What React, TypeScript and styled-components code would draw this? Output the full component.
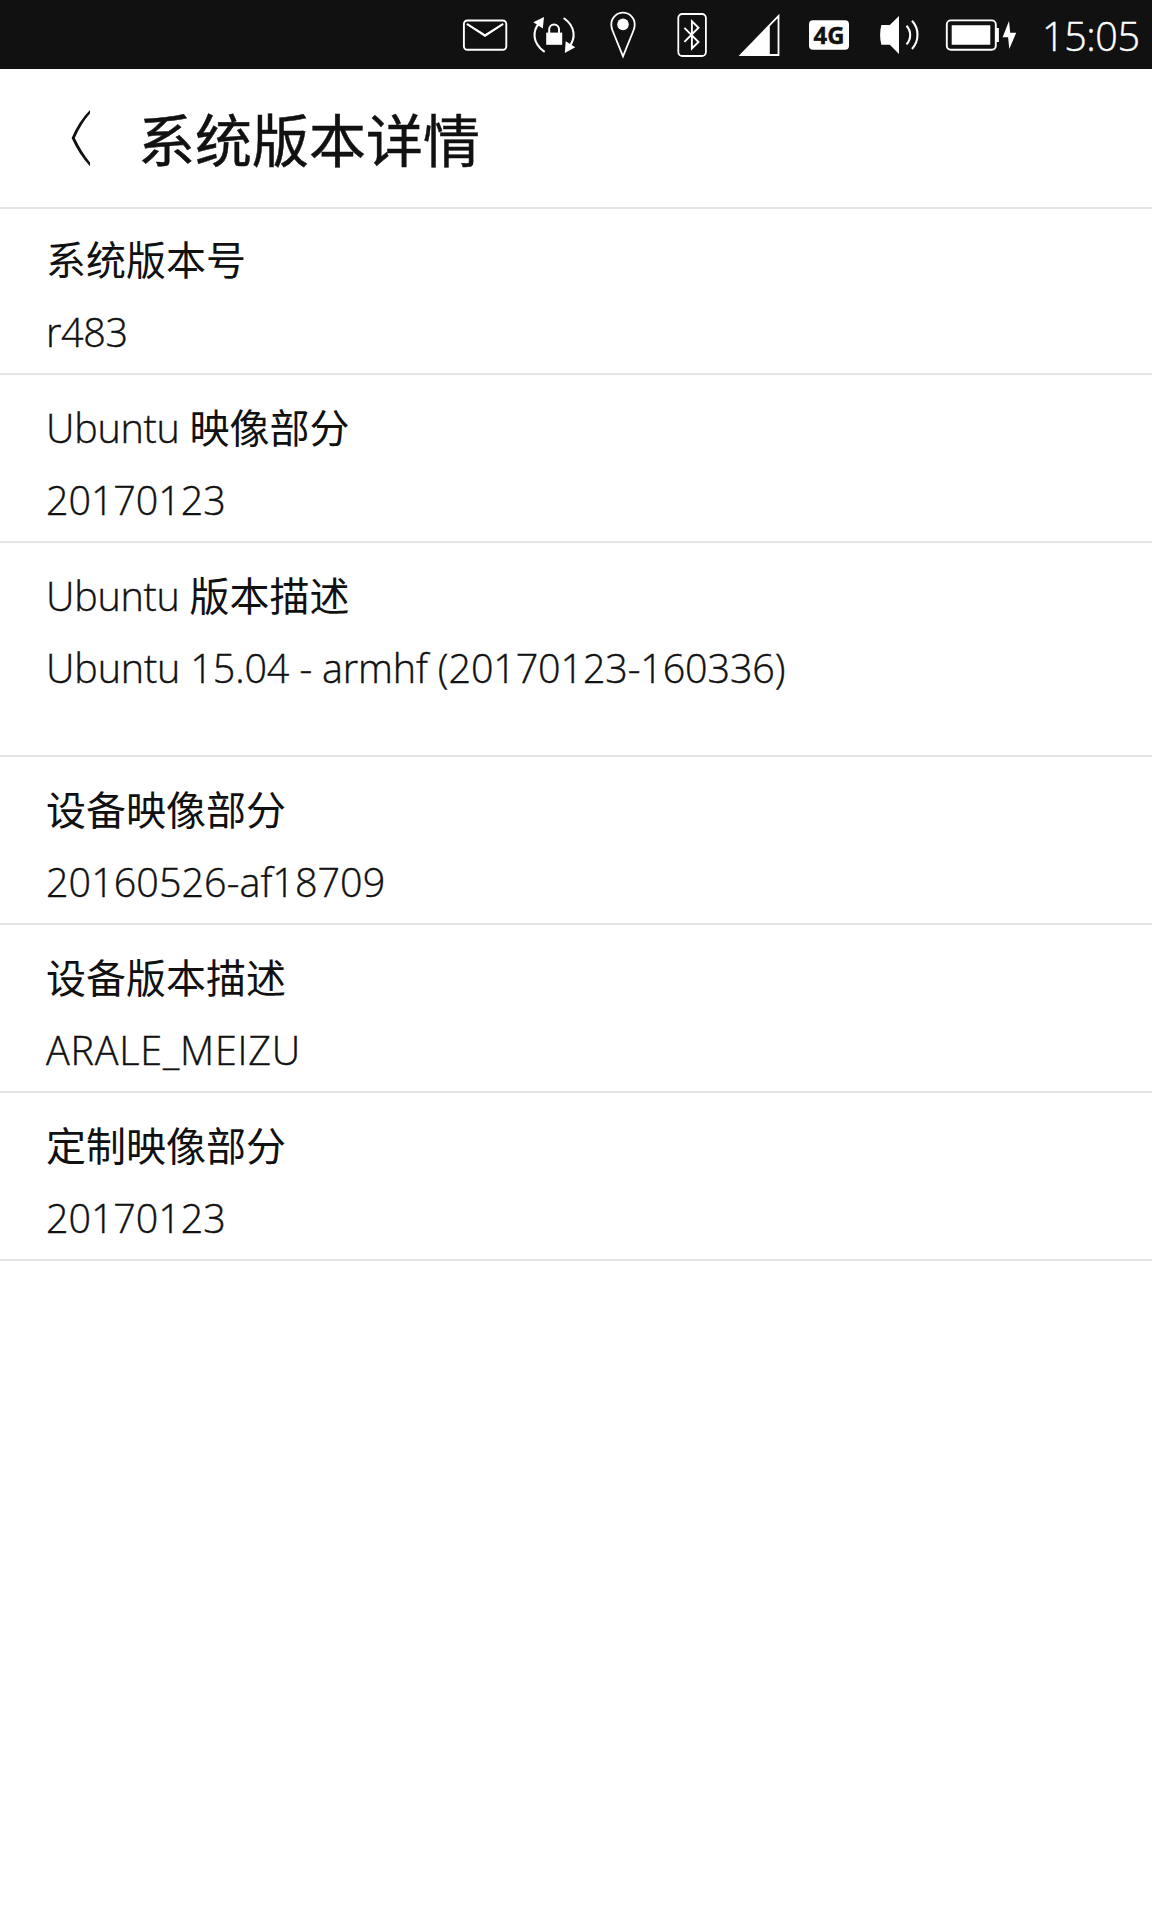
import React from "react";
import styled, { createGlobalStyle } from "styled-components";

const INK = "#111111";

const GlobalStyle = createGlobalStyle`
  html, body { margin: 0; padding: 0; background: #ffffff; }
`;

const Screen = styled.div`
  display: flex;
  flex-direction: column;
  width: 1152px;
  height: 1920px;
  overflow: hidden;
  background: #ffffff;
  color: ${INK};
  font-family: "Open Sans", "Noto Sans CJK SC", sans-serif;
  font-weight: 300;
`;

const StatusBar = styled.header`
  display: flex;
  flex: none;
  box-sizing: border-box;
  height: 69px;
  padding-left: 455px;
  gap: 9px;
  background: ${INK};
  color: #fff;
`;

const StatusIcon = styled.svg<{ $wide?: boolean }>`
  display: block;
  flex: none;
  width: ${(p) => (p.$wide ? 92 : 60)}px;
  height: 69px;
`;

const Clock = styled.time`
  flex: none;
  margin-left: 3px;
  font-size: 39.5px;
  line-height: 72px;
  letter-spacing: -0.4px;
  white-space: nowrap;
  -webkit-text-stroke: 0.4px currentColor;
`;

const TitleBar = styled.div`
  display: flex;
  flex: none;
  align-items: center;
  box-sizing: border-box;
  height: 140px;
  padding-left: 60px;
  border-bottom: 2px solid #e5e5e5;
`;

const BackButton = styled.button`
  display: block;
  width: 40px;
  height: 60px;
  margin-right: 38px;
  padding: 0;
  border: 0;
  background: none;
  color: inherit;
`;

const Title = styled.h1`
  margin: 0;
  padding-top: 4px;
  font-size: 57px;
  font-weight: 400;
  line-height: 72px;
  white-space: nowrap;
  -webkit-text-stroke: 0.5px currentColor;
`;

const List = styled.dl`
  display: flex;
  flex-direction: column;
  margin: 0;
`;

const Row = styled.div<{ $top: number; $bottom: number }>`
  display: flex;
  flex-direction: column;
  gap: 24px;
  padding: ${(p) => p.$top}px 46px ${(p) => p.$bottom}px;
  border-bottom: 2px solid #e5e5e5;
`;

const Label = styled.dt`
  margin: 0;
  height: 48px;
  font-size: 40px;
  font-weight: 400;
  line-height: 48px;
  white-space: pre;
`;

const Latin = styled.span<{ $spacing: number }>`
  font-size: 39.5px;
  font-weight: 300;
  letter-spacing: ${(p) => p.$spacing}px;
  -webkit-text-stroke: 0.4px currentColor;
`;

const Value = styled.dd`
  margin: 0;
  height: 48px;
  font-size: 40px;
  line-height: 48px;
  white-space: nowrap;
`;

type Entry = { prefix?: string; label: string; value: string; spacing: number; top?: number; bottom?: number };

const entries: Entry[] = [
  { label: "系统版本号", value: "r483", spacing: -0.3, top: 27 },
  { prefix: "Ubuntu ", label: "映像部分", value: "20170123", spacing: -0.1 },
  { prefix: "Ubuntu ", label: "版本描述", value: "Ubuntu 15.04 - armhf (20170123-160336)", spacing: -0.14, bottom: 63 },
  { label: "设备映像部分", value: "20160526-af18709", spacing: 0.04 },
  { label: "设备版本描述", value: "ARALE_MEIZU", spacing: 0.8 },
  { label: "定制映像部分", value: "20170123", spacing: -0.1 },
];

const StatusIcons = () => (
  <>
    <StatusIcon viewBox="455 0 60 69" fill="none" stroke="currentColor">
      <rect x="463.9" y="20.5" width="42.4" height="29.3" rx="3.5" strokeWidth="1.9" />
      <path d="M467 23.4 L485 34.6 L503 23.4 L503.6 24.8 L485 37 L466.4 24.8Z" fill="#fff" stroke="none" />
      <path d="M467.6 24.3 L485 35.3 L502.4 24.3" strokeWidth="1.8" strokeLinecap="round" />
    </StatusIcon>
    <StatusIcon viewBox="524 0 60 69" fill="none" stroke="currentColor">
      <path d="M544 51.3 C532.5 43 532 31 539.5 23" strokeWidth="2.1" strokeLinecap="round" />
      <path d="M564.3 18.5 C575.5 26.5 576 38.5 569 46.8" strokeWidth="2.1" strokeLinecap="round" />
      <path d="M533.3 22.3 L544 17 L542.8 28.5Z M565.7 41.3 L575.3 47.3 L564.8 53Z" fill="#fff" stroke="none" />
      <rect x="546.2" y="32.6" width="16" height="12.2" fill="#fff" stroke="none" />
      <path d="M549.2 33 V29.3 A4.9 4.9 0 0 1 559 29.3 V33" strokeWidth="2" />
    </StatusIcon>
    <StatusIcon viewBox="593 0 60 69" fill="none" stroke="currentColor">
      <path d="M623 56.3 L612.5 30.5 C611.6 28.3 611.3 26.5 611.3 24.4 A11.7 11.7 0 0 1 634.7 24.4 C634.7 26.5 634.4 28.3 633.5 30.5Z" strokeWidth="1.8" />
      <circle cx="623" cy="24.4" r="5.8" fill="#fff" stroke="none" />
    </StatusIcon>
    <StatusIcon viewBox="662 0 60 69" fill="none" stroke="currentColor">
      <rect x="678.3" y="14" width="27.6" height="42" rx="4" strokeWidth="1.8" />
      <path d="M684.4 27.8 L698.5 42 L691.9 48.5 V21.2 L698.5 27.7 L684.4 41.8" strokeWidth="1.9" />
    </StatusIcon>
    <StatusIcon viewBox="731 0 60 69" fill="currentColor">
      <path fillRule="evenodd" d="M738.5 56 L779.4 13.8 V56Z M769.8 26.3 V54 H777.6 V18.3Z" />
    </StatusIcon>
    <StatusIcon viewBox="800 0 60 69" fill="currentColor">
      <rect x="809" y="20.3" width="40" height="29.4" rx="4" />
      <text x="813.5" y="43.6" fill={INK} fontFamily="Open Sans" fontWeight="700" fontSize="24" stroke={INK} strokeWidth="0.4" textLength="31" lengthAdjust="spacingAndGlyphs">4G</text>
    </StatusIcon>
    <StatusIcon viewBox="869 0 60 69" fill="none" stroke="currentColor">
      <path d="M889.8 25 L899 16 V54 L889.8 44.8 H881.4 C879.7 38.5 879.7 31.3 881.4 25Z" fill="#fff" stroke="none" />
      <path d="M906.5 25.8 C911.4 31 911.4 39 906.5 44.4 M912 20.8 C919.3 28.6 919.3 41 912 49" strokeWidth="2.1" />
    </StatusIcon>
    <StatusIcon $wide viewBox="938 0 92 69" fill="none" stroke="currentColor">
      <rect x="946.8" y="20.4" width="49" height="29.4" rx="4" strokeWidth="1.9" />
      <path d="M951.7 25.3 H990.3 V44.7 H951.7Z M996 28 H998.9 V42 H996Z M1009 21 L1002.6 37.3 H1008.1 L1009.3 49 L1016.2 32.7 H1010.2Z" fill="#fff" stroke="none" />
    </StatusIcon>
  </>
);

export default function App() {
  return (
    <Screen>
      <GlobalStyle />
      <StatusBar>
        <StatusIcons />
        <Clock>15:05</Clock>
      </StatusBar>
      <TitleBar>
        <BackButton aria-label="返回">
          <svg width="40" height="60" viewBox="60 108 40 60" fill="currentColor">
            <path d="M90 110 V113.6 Q81.5 123 74.8 138 Q81.5 152 90 162.6 V166.2 Q79 154.5 71.6 138 Q79 121 90 110Z" />
          </svg>
        </BackButton>
        <Title>系统版本详情</Title>
      </TitleBar>
      <List>
        {entries.map((e) => (
          <Row key={e.label} $top={e.top ?? 29} $bottom={e.bottom ?? 17}>
            <Label>
              {e.prefix && <Latin $spacing={-0.25}>{e.prefix}</Latin>}
              {e.label}
            </Label>
            <Value>
              <Latin $spacing={e.spacing}>{e.value}</Latin>
            </Value>
          </Row>
        ))}
      </List>
    </Screen>
  );
}
